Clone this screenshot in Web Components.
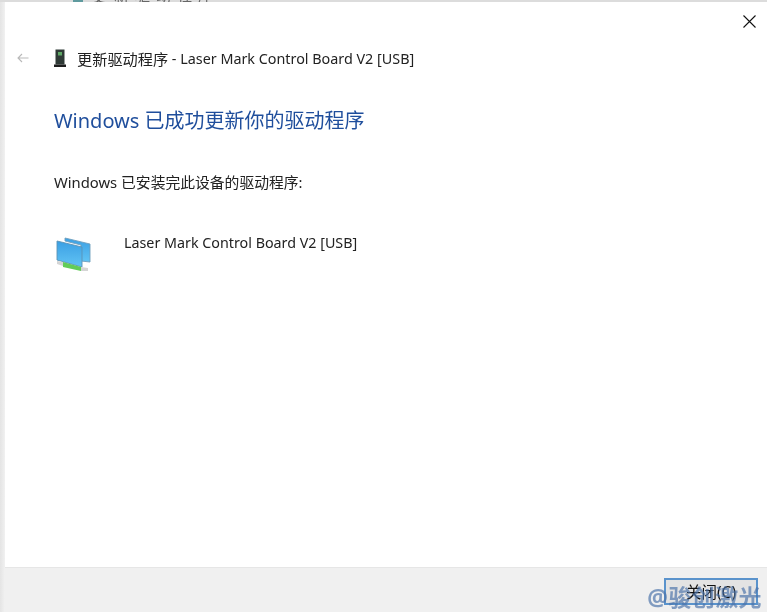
<!DOCTYPE html>
<html lang="zh">
<head>
<meta charset="utf-8">
<title>更新驱动程序</title>
<style>
  html, body { margin: 0; padding: 0; background: #fff; }
  body { font-family: "Noto Sans", "Noto Sans CJK SC", sans-serif; color: #1a1a1a; }
</style>
</head>
<body>
<driver-dialog>
  <wizard-header title-text="更新驱动程序" device-text=" - Laser Mark Control Board V2 [USB]"></wizard-header>
  <h-success>Windows 已成功更新你的驱动程序</h-success>
  <p-line>Windows 已安装完此设备的驱动程序:</p-line>
  <device-row>Laser Mark Control Board V2 [USB]</device-row>
  <dialog-footer slot="footer"></dialog-footer>
</driver-dialog>

<script>
class DriverDialog extends HTMLElement {
  constructor() {
    super();
    this.attachShadow({ mode: "open" }).innerHTML = `
      <style>
        :host { display: flex; flex-direction: column; width: 767px; height: 612px; overflow: hidden; position: relative; background: #fff; filter: blur(.35px); }
        .behind { display: flex; height: 2px; flex: none; overflow: hidden; background: #dcdcdc; padding-left: 73px; font-size: 15px; line-height: 15px; color: #666; }
        .behind i { width: 10px; height: 2px; margin-right: 10px; background: #5f9a9e; flex: none; }
        .behind span { display: block; margin-top: -12px; letter-spacing: 6px; }
        .frame { flex: 1; display: flex; min-height: 0; }
        .edge { width: 5px; flex: none; background: linear-gradient(to right, #e4e4e4, #f1f1f1); }
        .inner { flex: 1; display: flex; flex-direction: column; min-width: 0; }
        .content { flex: 1; }
        .close { position: absolute; top: 15px; right: 11px; width: 13px; height: 13px; }
        .close svg { display: block; }
      </style>
      <div class="behind"><i></i><span>更新驱动程序</span></div>
      <div class="frame">
        <div class="edge"></div>
        <div class="inner">
          <div class="content"><slot></slot></div>
          <slot name="footer"></slot>
        </div>
      </div>
      <div class="close">
        <svg width="13" height="13" viewBox="0 0 13 13"><path d="M.5.5l12 12M12.5.5l-12 12" stroke="#111" stroke-width="1.1" fill="none"/></svg>
      </div>`;
  }
}

class WizardHeader extends HTMLElement {
  constructor() {
    super();
    this.attachShadow({ mode: "open" }).innerHTML = `
      <style>
        :host { display: flex; align-items: center; height: 22px; margin-top: 45px; padding-left: 12px; font-size: 14.35px; color: #222; white-space: pre; }
        .back { width: 12px; height: 10px; margin-right: 25px; flex: none; }
        .dev { width: 12px; height: 18px; margin-right: 11px; flex: none; }
        .cjk { font-size: 15.2px; }
        svg { display: block; }
      </style>
      <svg class="back" viewBox="0 0 12 10"><path d="M11.5 5H1M5 1L1 5l4 4" stroke="#b9b9b9" stroke-width="1.1" fill="none"/></svg>
      <svg class="dev" viewBox="0 0 12 18">
        <rect x="1.5" y="0.5" width="9" height="15" fill="#2f3a36"/>
        <rect x="4" y="3" width="4" height="3.5" fill="#5fa866"/>
        <rect x="0" y="15.5" width="12" height="2.5" fill="#1d1d1d"/>
      </svg>
      <span class="cjk"></span><span class="rest"></span>`;
  }
  connectedCallback() {
    this.shadowRoot.querySelector(".cjk").textContent = this.getAttribute("title-text");
    this.shadowRoot.querySelector(".rest").textContent = this.getAttribute("device-text");
  }
}

class HSuccess extends HTMLElement {
  constructor() {
    super();
    this.attachShadow({ mode: "open" }).innerHTML = `
      <style>
        :host { display: block; margin: 37px 0 0 49px; font-size: 20px; line-height: 30px; color: #1f4e9c; white-space: nowrap; }
      </style><slot></slot>`;
  }
}

class PLine extends HTMLElement {
  constructor() {
    super();
    this.attachShadow({ mode: "open" }).innerHTML = `
      <style>
        :host { display: block; margin: 36px 0 0 49px; font-size: 14.8px; line-height: 20px; color: #222; white-space: nowrap; }
      </style><slot></slot>`;
  }
}

class DeviceRow extends HTMLElement {
  constructor() {
    super();
    this.attachShadow({ mode: "open" }).innerHTML = `
      <style>
        :host { display: flex; align-items: flex-start; margin: 41px 0 0 50px; font-size: 14.3px; line-height: 20px; color: #222; white-space: nowrap; }
        svg { display: block; width: 37px; height: 36px; margin: 4px 32px 0 0; flex: none; }
      </style>
      <svg viewBox="0 0 37 36">
        <defs>
          <linearGradient id="scr" x1="0" y1="0" x2="0" y2="1">
            <stop offset="0" stop-color="#3a9fe4"/>
            <stop offset="1" stop-color="#62c4f4"/>
          </linearGradient>
        </defs>
        <path d="M10 1l25 6v18l-9-1V8L10 4z" fill="url(#scr)" stroke="#6f9fbd" stroke-width=".9"/>
        <path d="M2 4l25 6v20L2 23z" fill="url(#scr)" stroke="#5b93b5" stroke-width=".9"/>
        <path d="M2 24l6 1v4l-6-2zM26 30l7 1v3h-7z" fill="#d5d5d5"/>
        <path d="M8 25l18 5v4L8 30z" fill="#62cc58"/>
      </svg>
      <slot></slot>`;
  }
}

class DialogFooter extends HTMLElement {
  constructor() {
    super();
    this.attachShadow({ mode: "open" }).innerHTML = `
      <style>
        :host { display: flex; justify-content: flex-end; align-items: flex-start; height: 45px; box-sizing: border-box; padding: 10px 9px 0 0; background: #f0f0f0; border-top: 1px solid #e6e6e6; position: relative; }
        button { width: 94px; height: 27px; box-sizing: border-box; border: 2px solid #5a93cc; background: #e3e3e3; font: 15.5px "Noto Sans", "Noto Sans CJK SC", sans-serif; color: #111; padding: 0; }
        .mark { position: absolute; right: 5px; bottom: 2px; font: bold 23px/26px "Noto Sans", "Noto Sans CJK SC", sans-serif; letter-spacing: .4px; color: rgba(75, 115, 170, .68); white-space: nowrap; pointer-events: none; }
      </style>
      <button>关闭(C)</button>
      <div class="mark">@骏创激光</div>`;
  }
}

customElements.define("driver-dialog", DriverDialog);
customElements.define("wizard-header", WizardHeader);
customElements.define("h-success", HSuccess);
customElements.define("p-line", PLine);
customElements.define("device-row", DeviceRow);
customElements.define("dialog-footer", DialogFooter);
</script>
</body>
</html>
